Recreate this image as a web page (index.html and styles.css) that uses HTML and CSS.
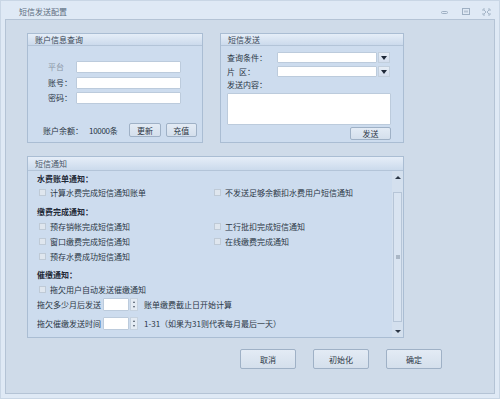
FILE: index.html
```html
<!DOCTYPE html>
<html lang="zh-CN">
<head>
<meta charset="utf-8">
<title>短信发送配置</title>
<link rel="stylesheet" href="styles.css">
</head>
<body>
<div class="window">
  <div class="titlebar">
    <span class="title">短信发送配置</span>
    <div class="win-ctrls">
      <svg class="ctl" width="9" height="8" viewBox="0 0 9 8"><rect x="1.5" y="3.5" width="6" height="2" rx="1" fill="none" stroke="#9fb0c3"/></svg>
      <svg class="ctl" width="9" height="8" viewBox="0 0 9 8"><rect x="1.5" y="0.5" width="7" height="6" fill="none" stroke="#9fb0c3"/><rect x="3" y="2.5" width="4" height="2" fill="#b9c6d5"/></svg>
      <svg class="ctl" width="9" height="8" viewBox="0 0 9 8"><path d="M1 3V1h2M6 1h2v2M8 5v2H6M3 7H1V5M2 2l2 2M7 2L5 4M7 6L5 4M2 6l2-2" fill="none" stroke="#9fb0c3" stroke-width="0.9"/></svg>
    </div>
  </div>
  <div class="panel">
    <div class="top-row">
      <section class="group g-account">
        <div class="group-head">账户信息查询</div>
        <div class="account-body">
          <div class="form-grid">
            <span class="lbl disabled">平台</span><input class="field acc-field" type="text">
            <span class="lbl">账号：</span><input class="field acc-field" type="text">
            <span class="lbl">密码：</span><input class="field acc-field" type="text">
          </div>
          <div class="balance-row">
            <span class="bal-lbl">账户余额：</span>
            <span class="bal-val">10000条</span>
            <button class="btn btn-sm">更新</button>
            <button class="btn btn-sm">充值</button>
          </div>
        </div>
      </section>
      <section class="group g-sms">
        <div class="group-head">短信发送</div>
        <div class="sms-body">
          <div class="sel-row">
            <span class="sel-lbl">查询条件：</span>
            <input class="field sel-field" type="text">
            <span class="drop"><svg width="6" height="4" viewBox="0 0 6 4"><path d="M0 0h6L3 4z" fill="#1e2838"/></svg></span>
          </div>
          <div class="sel-row">
            <span class="sel-lbl">片&ensp;区：</span>
            <input class="field sel-field" type="text">
            <span class="drop"><svg width="6" height="4" viewBox="0 0 6 4"><path d="M0 0h6L3 4z" fill="#1e2838"/></svg></span>
          </div>
          <div class="content-lbl">发送内容：</div>
          <textarea class="field content-area"></textarea>
          <div class="send-row"><button class="btn btn-send">发送</button></div>
        </div>
      </section>
    </div>

    <section class="group g-notify">
      <div class="group-head notify-head">短信通知</div>
      <div class="notify-body">
        <div class="notify-content">
          <div class="sec-title">水费账单通知：</div>
          <div class="check-grid first">
            <label class="chk"><span class="box"></span>计算水费完成短信通知账单</label>
            <label class="chk"><span class="box"></span>不发送足够余额扣水费用户短信通知</label>
          </div>

          <div class="sec-title sec-gap">缴费完成通知：</div>
          <div class="check-grid">
            <label class="chk"><span class="box"></span>预存销帐完成短信通知</label>
            <label class="chk"><span class="box"></span>工行批扣完成短信通知</label>
            <label class="chk"><span class="box"></span>窗口缴费完成短信通知</label>
            <label class="chk"><span class="box"></span>在线缴费完成通知</label>
            <label class="chk"><span class="box"></span>预存水费成功短信通知</label>
          </div>

          <div class="sec-title sec-gap2">催缴通知：</div>
          <label class="chk chk-single"><span class="box"></span>拖欠用户自动发送催缴通知</label>
          <div class="spin-row">
            <span class="spin-lbl">拖欠多少月后发送</span>
            <input class="field spin-input" type="text">
            <span class="spin-btns"><i class="tri-up"></i><i class="tri-down"></i></span>
            <span class="spin-note">账单缴费截止日开始计算</span>
          </div>
          <div class="spin-row spin-row2">
            <span class="spin-lbl">拖欠催缴发送时间</span>
            <input class="field spin-input" type="text">
            <span class="spin-btns"><i class="tri-up"></i><i class="tri-down"></i></span>
            <span class="spin-note">1-31（如果为31则代表每月最后一天）</span>
          </div>
        </div>
        <div class="scrollbar">
          <span class="sb-arrow"><i class="sb-up"></i></span>
          <span class="sb-thumb"><i class="grip"></i></span>
          <span class="sb-arrow"><i class="sb-down"></i></span>
        </div>
      </div>
    </section>

    <div class="actions">
      <button class="btn btn-lg">取消</button>
      <button class="btn btn-lg">初始化</button>
      <button class="btn btn-lg">确定</button>
    </div>
  </div>
</div>
</body>
</html>
```

FILE: styles.css
```css
* { box-sizing: border-box; }

html, body {
  margin: 0;
  padding: 0;
}

body {
  width: 500px;
  height: 399px;
  font-family: "Noto Sans CJK SC", "Noto Sans", sans-serif;
  font-size: 8px;
  color: #2b3645;
  overflow: hidden;
}

.window {
  width: 500px;
  height: 399px;
  background: #dfe9f5;
  border: 1px solid #c9d6e5;
  display: flex;
  flex-direction: column;
}

.titlebar {
  height: 18px;
  display: flex;
  align-items: flex-start;
  padding: 5px 8px 0 18px;
}

.title {
  line-height: 12px;
  color: #5c6c80;
  flex: 1;
}

.win-ctrls {
  display: flex;
  gap: 12px;
  padding-top: 2px;
}

.ctl { display: block; }

.panel {
  flex: 1;
  margin: 0 4px 4px 4px;
  border: 1px solid #b4c3d5;
  background: #cfdbe9;
  padding: 13px 0 0 21px;
}

.top-row {
  display: flex;
  gap: 17px;
}

.group {
  border: 1px solid #aabdd3;
  background: #cddcee;
}

.group-head {
  height: 12px;
  line-height: 11px;
  padding-left: 7px;
  background: linear-gradient(#e6eef8, #cbdaec);
  border-bottom: 1px solid #b3c4d8;
  color: #3a4656;
}

.g-account {
  width: 176px;
  height: 110px;
}

.account-body {
  padding: 15px 0 0 20px;
}

.form-grid {
  display: grid;
  grid-template-columns: 28px 105px;
  grid-auto-rows: 12px;
  row-gap: 3.5px;
  align-items: center;
}

.lbl { line-height: 12px; }
.lbl.disabled { color: #8b97a6; }

.field {
  display: block;
  margin: 0;
  padding: 0;
  background: #ffffff;
  border: 1px solid #bccbdc;
  border-radius: 1px;
  font: inherit;
  outline: none;
}

.acc-field { width: 105px; height: 12px; }

.balance-row {
  display: flex;
  align-items: center;
  margin-top: 19px;
  margin-left: -5px;
  height: 14px;
}

.bal-lbl { width: 47px; }
.bal-val { width: 41px; letter-spacing: -0.3px; }

.btn {
  margin: 0;
  padding: 0;
  font: inherit;
  color: #2b3645;
  background: linear-gradient(#e3ebf5, #d4dfec);
  border: 1px solid #9fb1c6;
  border-radius: 2px;
  display: flex;
  align-items: center;
  justify-content: center;
}

.btn-sm { width: 32px; height: 14px; margin-right: 5px; }

.g-sms {
  width: 184px;
  height: 110px;
}

.sms-body {
  padding: 6px 12px 0 6px;
  display: flex;
  flex-direction: column;
}

.sel-row {
  display: flex;
  align-items: center;
  height: 11px;
  margin-bottom: 3px;
}

.sel-lbl { width: 50px; }

.sel-field { width: 100px; height: 11px; }

.drop {
  width: 12px;
  height: 11px;
  margin-left: 1px;
  background: linear-gradient(#e7eef6, #d3dded);
  border: 1px solid #c2cfdd;
  display: flex;
  align-items: center;
  justify-content: center;
}

.drop svg { display: block; }

.content-lbl {
  line-height: 12px;
  margin-top: -1px;
  margin-bottom: 2px;
}

.content-area {
  width: 164px;
  height: 32px;
  resize: none;
}

.send-row {
  display: flex;
  justify-content: flex-end;
  margin-top: 2px;
}

.btn-send { width: 41px; height: 13px; }

.g-notify {
  width: 377px;
  height: 182px;
  margin-top: 13px;
  display: flex;
  flex-direction: column;
}

.notify-head {
  height: 14px;
  line-height: 14px;
  color: #4a5566;
}

.notify-body {
  flex: 1;
  display: flex;
}

.notify-content {
  flex: 1;
  padding: 1px 0 0 9px;
}

.sec-title {
  font-weight: bold;
  line-height: 14px;
  height: 14px;
  color: #1f2937;
}

.sec-gap { margin-top: 6px; }
.sec-gap2 { margin-top: 4px; }

.check-grid {
  display: grid;
  grid-template-columns: 175px auto;
  grid-auto-rows: 15px;
  align-items: center;
}

.check-grid.first { grid-auto-rows: 13px; }

.chk {
  display: flex;
  align-items: center;
  padding-left: 2px;
  white-space: nowrap;
}

.chk-single { height: 14px; }

.box {
  width: 7px;
  height: 7px;
  border: 1px solid #bfcad6;
  background: #dfe6ee;
  margin-right: 4px;
  flex: none;
}

.spin-row {
  display: flex;
  align-items: center;
  height: 13px;
  margin-top: 2px;
}

.spin-row2 { margin-top: 6px; }

.spin-lbl { width: 66px; }

.spin-input { width: 26px; height: 13px; }

.spin-btns {
  width: 8px;
  height: 13px;
  margin-left: 1px;
  background: #e4ebf3;
  border: 1px solid #c6d2df;
  display: flex;
  flex-direction: column;
  align-items: center;
  justify-content: space-evenly;
}

.tri-up, .tri-down {
  display: block;
  width: 0;
  height: 0;
  border-left: 1.5px solid transparent;
  border-right: 1.5px solid transparent;
}

.tri-up { border-bottom: 2px solid #4a5566; }
.tri-down { border-top: 2px solid #4a5566; }

.spin-note { margin-left: 6px; white-space: nowrap; }

.scrollbar {
  width: 11px;
  background: #d4e0ee;
  display: flex;
  flex-direction: column;
  align-items: center;
  padding: 0 1px;
}

.sb-arrow {
  height: 12px;
  width: 100%;
  display: flex;
  align-items: center;
  justify-content: center;
}

.sb-up, .sb-down {
  display: block;
  width: 0;
  height: 0;
  border-left: 3px solid transparent;
  border-right: 3px solid transparent;
}

.sb-up { border-bottom: 3px solid #2b3645; }
.sb-down { border-top: 3px solid #2b3645; }

.sb-thumb {
  flex: 1;
  width: 9px;
  margin: 9px 0 3px;
  background: #d9e4f1;
  border: 1px solid #b6c5d7;
  display: flex;
  align-items: center;
  justify-content: center;
}

.grip {
  display: block;
  width: 4px;
  height: 4px;
  background: #aab7c6;
}

.actions {
  display: flex;
  gap: 17px;
  margin-top: 11px;
  padding-left: 213px;
}

.btn-lg { width: 56px; height: 20px; }
```
